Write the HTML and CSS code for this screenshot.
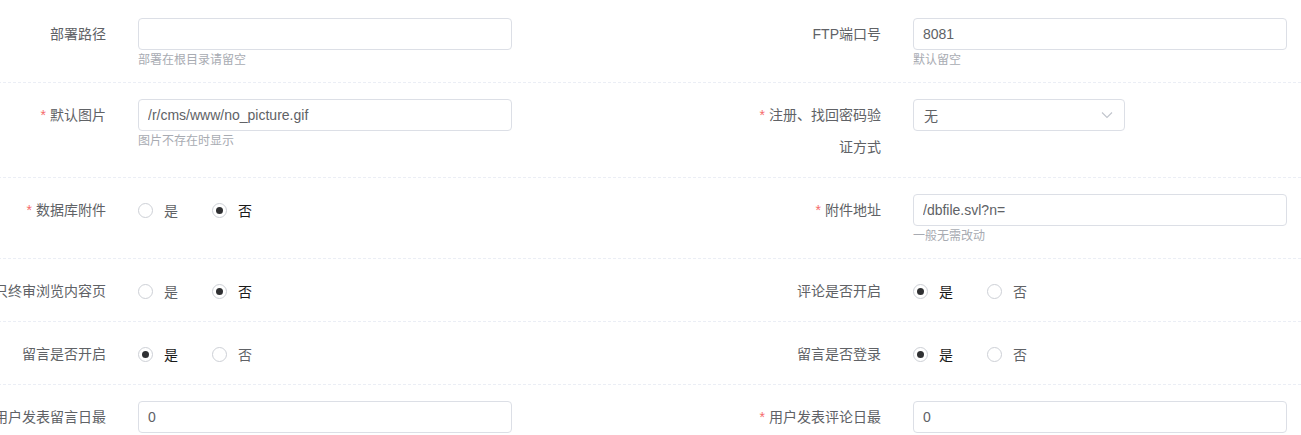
FILE: index.html
```html
<!DOCTYPE html>
<html lang="zh">
<head>
<meta charset="utf-8">
<title>设置</title>
<link rel="stylesheet" href="styles.css">
</head>
<body>
<div class="form">
  <div class="row">
    <div class="item left">
      <div class="label">部署路径</div>
      <div class="content">
        <input class="input" type="text" value="">
        <div class="hint">部署在根目录请留空</div>
      </div>
    </div>
    <div class="item">
      <div class="label">FTP端口号</div>
      <div class="content">
        <input class="input" type="text" value="8081">
        <div class="hint">默认留空</div>
      </div>
    </div>
  </div>

  <div class="row">
    <div class="item left">
      <div class="label"><span class="req">*</span>默认图片</div>
      <div class="content">
        <input class="input" type="text" value="/r/cms/www/no_picture.gif">
        <div class="hint">图片不存在时显示</div>
      </div>
    </div>
    <div class="item">
      <div class="label"><span class="req">*</span>注册、找回密码验证方式</div>
      <div class="content">
        <div class="select">
          <span>无</span>
          <svg class="arrow" width="14" height="14" viewBox="0 0 14 14"><path d="M2 4.5 L7 9.5 L12 4.5" fill="none" stroke="#c0c4cc" stroke-width="1.1"/></svg>
        </div>
      </div>
    </div>
  </div>

  <div class="row">
    <div class="item left">
      <div class="label"><span class="req">*</span>数据库附件</div>
      <div class="content">
        <div class="radios">
          <div class="radio"><span class="dot"></span><span class="rtext">是</span></div>
          <div class="radio checked"><span class="dot"></span><span class="rtext">否</span></div>
        </div>
      </div>
    </div>
    <div class="item">
      <div class="label"><span class="req">*</span>附件地址</div>
      <div class="content">
        <input class="input" type="text" value="/dbfile.svl?n=">
        <div class="hint">一般无需改动</div>
      </div>
    </div>
  </div>

  <div class="row">
    <div class="item left">
      <div class="label">只终审浏览内容页</div>
      <div class="content">
        <div class="radios">
          <div class="radio"><span class="dot"></span><span class="rtext">是</span></div>
          <div class="radio checked"><span class="dot"></span><span class="rtext">否</span></div>
        </div>
      </div>
    </div>
    <div class="item">
      <div class="label">评论是否开启</div>
      <div class="content">
        <div class="radios">
          <div class="radio checked"><span class="dot"></span><span class="rtext">是</span></div>
          <div class="radio"><span class="dot"></span><span class="rtext">否</span></div>
        </div>
      </div>
    </div>
  </div>

  <div class="row">
    <div class="item left">
      <div class="label">留言是否开启</div>
      <div class="content">
        <div class="radios">
          <div class="radio checked"><span class="dot"></span><span class="rtext">是</span></div>
          <div class="radio"><span class="dot"></span><span class="rtext">否</span></div>
        </div>
      </div>
    </div>
    <div class="item">
      <div class="label">留言是否登录</div>
      <div class="content">
        <div class="radios">
          <div class="radio checked"><span class="dot"></span><span class="rtext">是</span></div>
          <div class="radio"><span class="dot"></span><span class="rtext">否</span></div>
        </div>
      </div>
    </div>
  </div>

  <div class="row">
    <div class="item left">
      <div class="label">用户发表留言日最</div>
      <div class="content">
        <input class="input" type="text" value="0">
      </div>
    </div>
    <div class="item">
      <div class="label"><span class="req">*</span>用户发表评论日最</div>
      <div class="content">
        <input class="input" type="text" value="0">
      </div>
    </div>
  </div>
</div>
</body>
</html>
```

FILE: styles.css
```css
* {
  box-sizing: border-box;
}

html, body {
  margin: 0;
  background: #ffffff;
}

body {
  width: 1301px;
  height: 435px;
  overflow: hidden;
  font-family: "Liberation Sans", "Noto Sans CJK SC", sans-serif;
  font-size: 14px;
  color: #606266;
}

.form {
  width: 1323px;
  margin-left: -22px;
  padding-top: 2px;
}

.row {
  display: flex;
  padding: 16px 0 14px;
  border-bottom: 1px dashed #ebeef5;
}

.item {
  display: flex;
  align-items: flex-start;
}

.item.left {
  width: 775px;
  flex: none;
}

.label {
  width: 160px;
  flex: none;
  padding-right: 32px;
  text-align: right;
  line-height: 32px;
  color: #606266;
}

.req {
  color: #f56c6c;
  margin-right: 4px;
}

.content {
  display: flex;
  flex-direction: column;
}

.input {
  display: block;
  width: 374px;
  height: 32px;
  margin: 0;
  padding: 0 9px;
  border: 1px solid #dcdfe6;
  border-radius: 4px;
  font-family: "Liberation Sans", "Noto Sans CJK SC", sans-serif;
  font-size: 14px;
  color: #606266;
  background: #fff;
  outline: none;
}

.hint {
  margin-top: 3px;
  font-size: 12px;
  line-height: 15px;
  color: #a8abb2;
}

.select {
  width: 212px;
  height: 32px;
  border: 1px solid #dcdfe6;
  border-radius: 4px;
  display: flex;
  align-items: center;
  justify-content: space-between;
  padding: 0 10px 0 10px;
  color: #606266;
}

.arrow {
  display: block;
}

.radios {
  display: flex;
  align-items: center;
  height: 32px;
}

.radio {
  display: flex;
  align-items: center;
  margin-right: 34px;
  color: #606266;
}

.dot {
  width: 15px;
  height: 15px;
  border: 1px solid #cdd0d6;
  border-radius: 50%;
  display: flex;
  align-items: center;
  justify-content: center;
  background: #fff;
}

.radio.checked .dot::after {
  content: "";
  width: 7px;
  height: 7px;
  border-radius: 50%;
  background: #303133;
}

.rtext {
  padding-left: 11px;
}

.radio.checked .rtext {
  color: #1a1a1a;
}
```
